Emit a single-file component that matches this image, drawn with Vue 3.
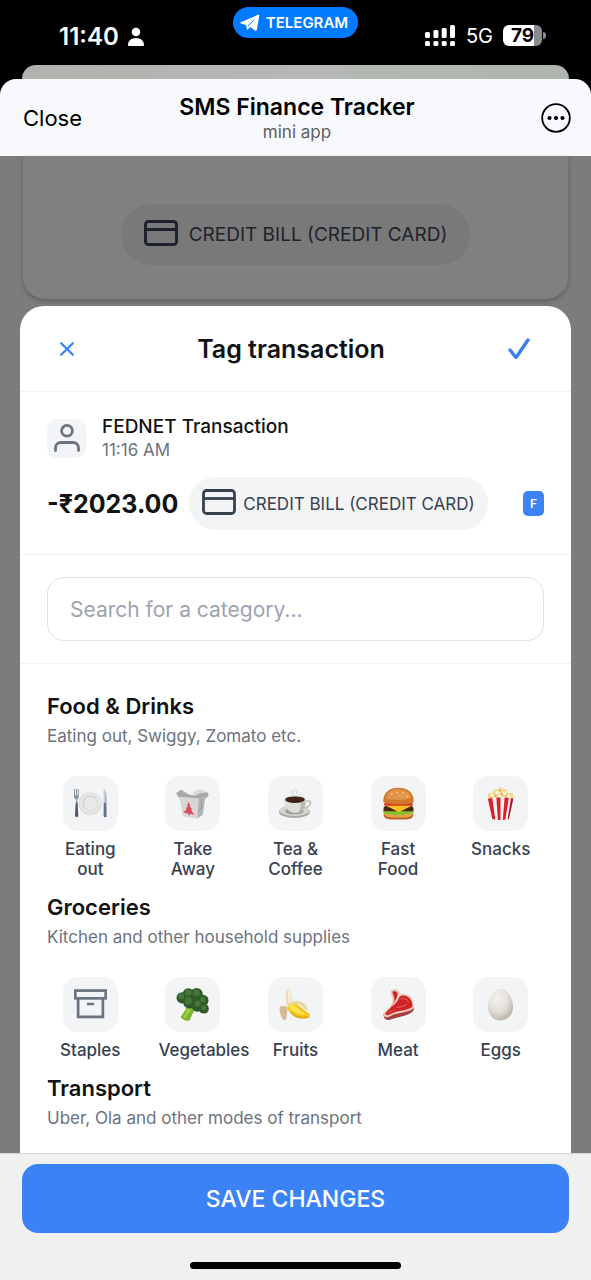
<script setup>
import { ref } from 'vue'

const query = ref('')

const groups = [
  {
    title: 'Food & Drinks',
    note: 'Eating out, Swiggy, Zomato etc.',
    items: [
      { icon: 'plate', label: 'Eating out' },
      { icon: 'takeaway', label: 'Take Away' },
      { icon: 'coffee', label: 'Tea & Coffee' },
      { icon: 'burger', label: 'Fast Food' },
      { icon: 'popcorn', label: 'Snacks' },
    ],
  },
  {
    title: 'Groceries',
    note: 'Kitchen and other household supplies',
    items: [
      { icon: 'box', label: 'Staples' },
      { icon: 'broccoli', label: 'Vegetables' },
      { icon: 'banana', label: 'Fruits' },
      { icon: 'meat', label: 'Meat' },
      { icon: 'egg', label: 'Eggs' },
    ],
  },
  {
    title: 'Transport',
    note: 'Uber, Ola and other modes of transport',
    items: [],
  },
]
</script>

<template>
  <div class="screen">
    <div class="status">
      <div class="status-row">
        <div class="clock">
          <span>11:40</span>
          <svg width="18" height="20" viewBox="0 0 18 20" fill="#fff">
            <circle cx="9" cy="5" r="4.3" />
            <path d="M1 18.2C.8 13.800 4.500 11 9 11s8.200 2.800 8 7.200c0 .5-.4.8-.9.8H1.900c-.5 0-.9-.3-.9-.8z" />
          </svg>
        </div>
        <div class="pill">
          <svg width="20" height="18" viewBox="0 0 20 18">
            <path fill="#fff" d="M.8 8.200 18 .8c.9-.4 1.500.1 1.300 1L16.800 16c-.2 1-.9 1.200-1.700.7l-4.700-3.600-2.500 2.400c-.5.5-1.100.3-1.200-.4l-.6-4.200L.8 9.500c-.8-.3-.8-1 0-1.300z" />
            <path fill="none" stroke="#007aff" stroke-width="1" d="M7.800 12.200 14.200 5.600" />
          </svg>
          <span>TELEGRAM</span>
        </div>
        <div class="signals">
          <svg width="31" height="22" viewBox="0 0 31 22" fill="#fff">
            <rect x="0" y="7" width="5" height="6" rx="1.500" />
            <rect x="8.400" y="5" width="5" height="8" rx="1.500" />
            <rect x="16.700" y="3" width="5" height="10" rx="1.500" />
            <rect x="25" y="0" width="5" height="13" rx="1.500" />
            <rect x="0" y="16" width="5" height="5" rx="1.500" />
            <rect x="8.400" y="16" width="5" height="5" rx="1.500" />
            <rect x="16.700" y="16" width="5" height="5" rx="1.500" />
            <rect x="25" y="16" width="5" height="5" rx="1.500" />
          </svg>
          <span class="network">5G</span>
          <span class="battery">79</span>
        </div>
      </div>
      <div class="behind"></div>
    </div>

    <header class="app-bar">
      <button class="close" type="button">Close</button>
      <div class="app-name">
        <h1>SMS Finance Tracker</h1>
        <p>mini app</p>
      </div>
      <button class="more" type="button" aria-label="More options">
        <svg width="30" height="30" viewBox="0 0 30 30">
          <circle cx="15" cy="15" r="13.800" fill="none" stroke="#000" stroke-width="1.800" />
          <circle cx="8.500" cy="15" r="2.100" /><circle cx="15" cy="15" r="2.100" /><circle cx="21.500" cy="15" r="2.100" />
        </svg>
      </button>
    </header>

    <main class="stage">
      <div class="dim-card">
        <div class="dim-chip">
          <svg class="card-icon" width="34" height="26" viewBox="0 0 34 26" fill="none" stroke="currentColor" stroke-width="3">
            <rect x="1.500" y="1.500" width="31" height="23" rx="3" /><path d="M1.500 9.500h31" />
          </svg>
          <span>CREDIT BILL (CREDIT CARD)</span>
        </div>
      </div>

      <section class="sheet">
        <div class="sheet-head">
          <button type="button" aria-label="Cancel">
            <svg width="14" height="14" viewBox="0 0 14 14" stroke="#3b82f6" stroke-width="2.200" stroke-linecap="round">
              <path d="M1.200 1.200l11.600 11.600M12.800 1.200 1.200 12.800" />
            </svg>
          </button>
          <h2>Tag transaction</h2>
          <button type="button" aria-label="Confirm">
            <svg width="22" height="22" viewBox="0 0 22 22" fill="none" stroke="#3b82f6" stroke-width="3.500" stroke-linecap="round" stroke-linejoin="round">
              <path d="M2 12l6 7.500L20 2" />
            </svg>
          </button>
        </div>

        <div class="transaction">
          <div class="payee">
            <span class="avatar">
              <svg width="26" height="28" viewBox="0 0 26 28" fill="none" stroke="#6b7280" stroke-width="2.800" stroke-linecap="round">
                <circle cx="13" cy="6.800" r="5.400" />
                <path d="M1.500 26.500v-2.500c0-3.500 2.300-5.500 5.500-5.500h12c3.200 0 5.500 2 5.500 5.500v2.500" />
              </svg>
            </span>
            <div>
              <p class="payee-name">FEDNET Transaction</p>
              <p class="payee-time">11:16 AM</p>
            </div>
          </div>
          <div class="amount-row">
            <strong>-₹2023.00</strong>
            <span class="chip">
              <svg class="card-icon" width="34" height="26" viewBox="0 0 34 26" fill="none" stroke="currentColor" stroke-width="2.800">
                <rect x="1.500" y="1.500" width="31" height="23" rx="3" /><path d="M1.500 9.500h31" />
              </svg>
              <span>CREDIT BILL (CREDIT CARD)</span>
            </span>
            <span class="bank">F</span>
          </div>
        </div>

        <div class="search">
          <input v-model="query" type="text" placeholder="Search for a category..." aria-label="Search for a category" />
        </div>

        <div class="groups">
          <div v-for="group in groups" :key="group.title" class="group">
            <h3>{{ group.title }}</h3>
            <p class="note">{{ group.note }}</p>
            <div v-if="group.items.length" class="items">
              <button v-for="item in group.items" :key="item.label" class="item" type="button">
                <span class="tile">
                  <svg v-if="item.icon === 'plate'" viewBox="0 0 32 32">
                    <circle cx="15.700" cy="16" r="11" fill="#cfd1d2" />
                    <circle cx="15.700" cy="15.600" r="10.500" fill="#e6e6e5" />
                    <circle cx="15.700" cy="15.600" r="7.200" fill="#cbcccc" />
                    <circle cx="15.900" cy="16" r="6.500" fill="#e9e9e8" />
                    <path fill="#8795a5" d="M0 2h1v6h.8V2h1v6h.8V2h1v7.500c0 1.500-.7 2.300-1.300 2.600l.8 15.900c0 1.500-2.600 1.500-2.600 0l.7-15.900C.6 11.700 0 11 0 9.500z" />
                    <path fill="#4b5563" d="M1.700 15h1.500l.9 12.500c0 2-3.200 2-3.100 0z" />
                    <path fill="#a8b6c4" d="M29 2c2 1.500 3 7 2.600 13h-2z" />
                    <path fill="#64748b" d="M28.800 15h2.600l.3 13c0 1.800-3 1.800-3 0z" />
                    <path fill="#c9d2da" d="M28.600 3h1.400v12h-1.400z" />
                  </svg>
                  <svg v-else-if="item.icon === 'takeaway'" viewBox="0 0 32 32">
                    <path fill="#d8d9da" d="M17 5c3-3 10-3.500 13 1l-3 8H15z" />
                    <path fill="#a7a9aa" d="M0 6 5 2.600l7 4.500 6 1.500 6-2.600 7-1 .5 3.500L27.500 12l-24-.5z" />
                    <path fill="#d6d6d5" d="M3 9.500 22 11l-1.500 19.500L7 28.500z" />
                    <path fill="#b2b4b4" d="M22 11l6.500-2.500L26 27l-5.500 3.500z" />
                    <path fill="#dc4a5e" d="M11.800 14.500l2.300 3.500-1 .3 2.600 3.500-1.200.2 3.200 4.800-4-.8-.2 1.500-1.500-.3v-1.400l-5-1 3.500-3.300-1.100-.3 2.200-2.800-.8-.4z" />
                    <path fill="none" stroke="#8f9192" stroke-width=".8" d="M24 12c2 5 1 9-2 12" />
                  </svg>
                  <svg v-else-if="item.icon === 'coffee'" viewBox="0 0 32 32">
                    <ellipse cx="15" cy="24" rx="15" ry="6" fill="#aaa9a5" />
                    <ellipse cx="15" cy="22.700" rx="14.500" ry="5.300" fill="#d6d5d0" />
                    <ellipse cx="15" cy="23.500" rx="9" ry="3" fill="#9e9c96" />
                    <path fill="none" stroke="#c7c5be" stroke-width="1.800" d="M25 14c5-1.500 6.500.5 5 3s-4 3.500-7 3.500" />
                    <path fill="#dfded9" d="M5 12h21c0 7-4 13-10.500 13S5 19 5 12z" />
                    <path fill="#b8b6b0" d="M21 14h5c-.5 6-3.500 10-7 10.700 2-3 2.500-7 2-10.700z" />
                    <ellipse cx="15.500" cy="12" rx="10.500" ry="3.900" fill="#e2e0da" />
                    <ellipse cx="15.500" cy="12.300" rx="9.500" ry="3.200" fill="#3f2117" />
                    <path fill="none" stroke="#d5d6d7" stroke-width="1.200" stroke-linecap="round" d="M14 7c-3-2-1-3 0-4M17 6c1-2-1-2-1-3.500" />
                  </svg>
                  <svg v-else-if="item.icon === 'burger'" viewBox="0 0 32 32">
                    <path fill="#b9651f" d="M1.500 26h29c0 4-3 5.500-7 5.500H8.500c-4 0-7-1.500-7-5.500z" />
                    <path fill="#e7a14c" d="M2 25h28c0 3-3 4.500-7 4.500H9C5 29.500 2 28 2 25z" />
                    <path fill="#83c12d" d="M1 22c2-2 28-2 30 0 .8 2-.7 4-3 3.500-2 2-4 0-6 1.200-3 1.300-5-.6-8 .5-3 .7-4-1.500-7-.7C3.500 27 .2 25 1 22z" />
                    <rect x="1.500" y="18.500" width="29" height="5" rx="2.500" fill="#4b2414" />
                    <path fill="#fbc21f" d="M2 17.500h28l-5 2.500-8.500 4.500L8 20z" />
                    <rect x="2" y="15.500" width="28" height="2.800" rx="1.400" fill="#d93b24" />
                    <path fill="#d1782c" d="M1.200 14C1.200 5 8 .8 16 .8S30.800 5 30.800 14c0 3.500-29.600 3.500-29.600 0z" />
                    <path fill="#e09447" d="M3.500 11C5 4.500 10 2 16 2s11 3 12.500 8.500c-4 2.500-20 3-25 .5z" />
                    <path stroke="#f9d69b" stroke-width="1" stroke-linecap="round" d="M9 7l1-.7M14 5l1 .3M20 5.500l1 .5M24 9l1 .5M17 8.500h1" />
                  </svg>
                  <svg v-else-if="item.icon === 'popcorn'" viewBox="0 0 32 32">
                    <g fill="#efd78c">
                      <circle cx="7" cy="9" r="3.500" /><circle cx="12" cy="6" r="3.800" /><circle cx="19" cy="5.500" r="3.800" /><circle cx="25" cy="9" r="3.500" /><circle cx="16" cy="2.800" r="2.300" /><circle cx="16" cy="10" r="4" />
                    </g>
                    <g fill="#fff5d2">
                      <circle cx="8" cy="8" r="1.700" /><circle cx="13" cy="5" r="1.700" /><circle cx="20" cy="6" r="1.900" /><circle cx="24" cy="9" r="1.700" /><circle cx="15" cy="9" r="1.700" />
                    </g>
                    <path fill="none" stroke="#c28a2d" stroke-width=".9" d="M10 8l2 1M17 6l1 2M22 8l-1 2M14 3l2 1M6 10l2 1" />
                    <path fill="#f4eeee" d="M3.800 11.500c8-2 17-2 24.500 0L24 31c-5 1.300-11 1.300-16 0z" />
                    <path fill="#d5232e" d="M3.800 11.500 8 10.700 11 31.600 8 31zM12 10.200h4V32h-2.500zM20 10.200l4 .5L20.700 31.600l-2.500.3zM28.300 11.500 26 11l-3 20.200 1-.2z" />
                    <path fill="#a51c27" d="M27 11.200l1.300.3L24 31l-1 .2z" />
                  </svg>
                  <svg v-else-if="item.icon === 'box'" viewBox="0 0 32 32" fill="none" stroke="#6b7280" stroke-width="2.600">
                    <rect x="1.300" y="2.500" width="29.400" height="7.500" />
                    <path d="M4 10v18h24V10M12.500 15.500h7" />
                  </svg>
                  <svg v-else-if="item.icon === 'broccoli'" viewBox="0 0 32 32">
                    <path fill="#78b62d" d="M12 17l9 3-4 3-4 8.500c-2 1-7-1-8.500-3.500z" />
                    <path fill="#a0d047" d="M12 19l3 1-6 9.500-2-1z" />
                    <g fill="#2f5a27">
                      <circle cx="6" cy="9.500" r="5.500" /><circle cx="12" cy="5.800" r="5.500" /><circle cx="20" cy="6" r="6" /><circle cx="26" cy="12" r="5.500" /><circle cx="27" cy="20" r="4.800" /><circle cx="21" cy="17" r="6" /><circle cx="13" cy="14" r="6" />
                    </g>
                    <g fill="#437639">
                      <circle cx="5" cy="8" r="2.800" /><circle cx="12" cy="4.500" r="3" /><circle cx="20" cy="4.700" r="3.200" /><circle cx="26" cy="11" r="2.800" /><circle cx="12" cy="12.500" r="3.500" /><circle cx="21" cy="15" r="3" /><circle cx="27" cy="19" r="2.500" />
                    </g>
                  </svg>
                  <svg v-else-if="item.icon === 'banana'" viewBox="0 0 32 32">
                    <path fill="#eadcb8" d="M7.500 1.500c2-2 3.500 0 3.500 2l2 11-4 5c-3-5-3-12-1.500-18z" />
                    <path fill="#fbf3d9" d="M8.500 2h1.700l1.500 13-2 2z" />
                    <path fill="#d3bb93" d="M1 18c3-1 6-1 7.500 1L7 30c-1.500 2-3 1-4-1-2-4-3-8-2-11z" />
                    <path fill="#f7c71d" d="M10 15c6-4 13 7 19 9.500 1.500 1 1.500 3.500-.2 4.300C21 31 10 27 8.500 20z" />
                    <path fill="#ffe451" d="M11 15.500c5-1 8 8 16 10-8 .5-14-2-17-7z" />
                    <path fill="#e5a917" d="M10.500 22c4 5 11 6 18 5.500l.2 1.300C21 31 13 29 10.500 22z" />
                    <path fill="#e6d6a6" d="M11 14.500c7-4 15-1 16.500 5.500.3 2-1.300 2-2.300.7C22 16 18 14.500 12 16z" />
                  </svg>
                  <svg v-else-if="item.icon === 'meat'" viewBox="0 0 32 32">
                    <path fill="#a4403f" d="M1.500 25 9 20l21-3 1 3.500C29 27 14 28 7 31c-3 .8-6-2-5.500-6z" />
                    <path fill="#efc9bd" d="M9 2c4-2.500 8-.5 8.500 4 7-2 14 3.500 13.500 12-.2 5-13 6-19 7.500-4 1.500-7 4.500-10 2-2-2 0-4.500 3-7 5-4.500 6-7 4.500-12C8.500 6 7.500 3 9 2z" />
                    <path fill="#cc2426" d="M10.500 3.500c3-1 4.800.5 4.800 3l-1.800 6.500c1.500-4 5-6.500 9-5.500 4 1 7 5 7 9.500 0 4-10 4.500-16 6-4 1-6.500 4-9 3.200-2.500-1.200 0-3.200 2-5 5-5 6.500-8 5-13-.6-2-2-4-1-4.700z" />
                    <path fill="#f6ddd0" d="M15.500 6l2-.2c-1 4-2 7.500-7.500 12 2-4 4-7 5.500-11.800z" />
                    <path fill="none" stroke="#e85b50" stroke-width="1" d="M18 11c3-2 7 0 8 3M14 19c4 0 7-1 10-3M6 24l6-3" />
                  </svg>
                  <svg v-else viewBox="0 0 32 32">
                    <defs>
                      <radialGradient id="shell" cx="38%" cy="32%" r="72%">
                        <stop offset="0" stop-color="#f4f2ed" /><stop offset=".55" stop-color="#e3e0da" /><stop offset="1" stop-color="#b8b4ab" />
                      </radialGradient>
                    </defs>
                    <path fill="url(#shell)" d="M16 1c7 0 12.200 9 12.200 17.500C28.200 26 23 31.500 16 31.500S3.800 26 3.800 18.500C3.800 10 9 1 16 1z" />
                  </svg>
                </span>
                <span class="label">{{ item.label }}</span>
              </button>
            </div>
          </div>
        </div>
      </section>
    </main>

    <footer class="footer">
      <button class="save" type="button">SAVE CHANGES</button>
      <div class="home"></div>
    </footer>
  </div>
</template>

<style>
body {
  margin: 0;
  background: #7b7d7c;
}
</style>

<style scoped>
.screen {
  display: flex;
  flex-direction: column;
  min-height: 100vh;
  background: #7b7d7c;
  color: #111214;
  font-family: Inter, "Liberation Sans", sans-serif;
}
h1, h2, h3, p {
  margin: 0;
}
button {
  border: 0;
  padding: 0;
  background: none;
  color: inherit;
  font: inherit;
  cursor: pointer;
}
svg {
  display: block;
  flex: none;
}

.status {
  padding-bottom: 16px;
  background: #000;
  color: #fff;
}
.status-row {
  display: grid;
  grid-template-columns: 1fr auto 1fr;
  height: 65px;
}
.clock {
  display: flex;
  align-items: center;
  gap: 8px;
  padding: 8px 0 0 59px;
  font-size: 24px;
  font-weight: 600;
}
.pill {
  display: flex;
  align-items: center;
  gap: 6px;
  height: 31px;
  margin-top: 7px;
  padding: 0 10px 0 7px;
  border-radius: 16px;
  background: #007aff;
  font-size: 15px;
  font-weight: 600;
}
.signals {
  display: flex;
  align-items: center;
  justify-content: flex-end;
  gap: 10px;
  padding: 6px 49px 0 0;
}
.network {
  font-size: 20px;
  font-weight: 400;
}
.battery {
  position: relative;
  width: 39px;
  height: 21px;
  border-radius: 6px;
  background: linear-gradient(90deg, #fff 79%, #8b8b8b 79%);
  color: #000;
  font-size: 19px;
  font-weight: 700;
  line-height: 21px;
  text-align: center;
}
.battery::after {
  content: "";
  position: absolute;
  top: 7px;
  right: -4px;
  width: 3px;
  height: 7px;
  border-radius: 0 3px 3px 0;
  background: #8b8b8b;
}
.behind {
  height: 14px;
  margin: 0 22px;
  border-radius: 14px 14px 0 0;
  background: linear-gradient(90deg, #b1b1ad, #b7b8b6 50%, #b1b8af 75%, #adb5ac);
}

.app-bar {
  display: grid;
  grid-template-columns: 1fr auto 1fr;
  align-items: center;
  height: 77px;
  margin-top: -16px;
  padding: 0 20px 0 23px;
  border-radius: 16px 16px 0 0;
  background: #f7f9fc;
  color: #000;
}
.close {
  justify-self: start;
  font-size: 22px;
}
.more {
  justify-self: end;
}
.app-name {
  text-align: center;
}
.app-name h1 {
  font-size: 23px;
  font-weight: 600;
  line-height: 28px;
}
.app-name p {
  color: #5c5f64;
  font-size: 17px;
  line-height: 22px;
}

.stage {
  display: flex;
  flex: 1;
  flex-direction: column;
  padding: 0 20px;
}
.dim-card {
  display: flex;
  justify-content: center;
  margin: 0 3px 7px;
  padding: 48px 0 34px;
  border-radius: 0 0 22px 22px;
  background: #808080;
  box-shadow: 0 2px 5px rgb(0 0 0 / 25%);
}
.dim-chip {
  display: flex;
  align-items: center;
  gap: 11px;
  height: 61px;
  padding: 0 23px;
  border-radius: 31px;
  background: #797979;
  color: #1d222b;
  font-size: 19px;
}
.card-icon {
  margin-bottom: 4px;
}

.sheet {
  display: flex;
  flex: 1;
  flex-direction: column;
  border-radius: 24px 24px 0 0;
  background: #fff;
}
.sheet-head {
  display: flex;
  align-items: center;
  justify-content: space-between;
  height: 85px;
  padding: 0 41px 0 40px;
  border-bottom: 1px solid #eff0f2;
}
.sheet-head h2 {
  font-size: 25px;
  font-weight: 600;
  line-height: 32px;
}
.transaction {
  padding: 23px 27px 24px;
  border-bottom: 1px solid #eff0f2;
}
.payee {
  display: flex;
  align-items: center;
  gap: 16px;
}
.avatar {
  display: grid;
  place-items: center;
  width: 39px;
  height: 39px;
  border-radius: 10px;
  background: #f3f4f6;
}
.payee-name {
  font-size: 19px;
  font-weight: 500;
  line-height: 24px;
}
.payee-time {
  color: #6b7280;
  font-size: 17px;
  line-height: 22px;
}
.amount-row {
  display: flex;
  align-items: center;
  margin-top: 16px;
}
.amount-row strong {
  font-size: 25px;
  font-weight: 700;
}
.chip {
  display: flex;
  align-items: center;
  gap: 7px;
  height: 53px;
  margin-left: 11px;
  padding: 0 13px;
  border-radius: 27px;
  background: #f3f4f6;
  color: #374151;
  font-size: 17px;
}
.bank {
  width: 21px;
  height: 25px;
  margin-left: auto;
  border-radius: 5px;
  background: #3b82f6;
  color: #fff;
  font-size: 12px;
  font-weight: 600;
  line-height: 25px;
  text-align: center;
}
.search {
  padding: 22px 27px;
  border-bottom: 1px solid #eff0f2;
}
.search input {
  display: block;
  box-sizing: border-box;
  width: 100%;
  height: 64px;
  padding: 0 22px;
  border: 1px solid #dfe1e5;
  border-radius: 17px;
  background: #fff;
  color: #111214;
  font: inherit;
  font-size: 21px;
}
.search input::placeholder {
  color: #9ca3af;
  opacity: 1;
}
.groups {
  display: flex;
  flex-direction: column;
  gap: 12px;
  padding: 26px 27px 23px;
}
.group h3 {
  font-size: 22px;
  font-weight: 600;
  line-height: 32px;
}
.note {
  margin-top: 2px;
  color: #6b7280;
  font-size: 17px;
  line-height: 24px;
}
.items {
  display: grid;
  grid-template-columns: repeat(5, minmax(0, 1fr));
  gap: 16px;
  margin-top: 28px;
}
.item {
  display: flex;
  flex-direction: column;
  align-items: center;
  gap: 8px;
}
.tile {
  display: grid;
  place-items: center;
  width: 55px;
  height: 55px;
  border-radius: 15px;
  background: #f3f4f6;
}
.tile svg {
  width: 33px;
  height: 33px;
}
.label {
  max-width: 69px;
  color: #374151;
  font-size: 17px;
  font-weight: 500;
  line-height: 20px;
}

.footer {
  padding: 10px 22px 11px;
  border-top: 1px solid #d6d6d6;
  background: #f0f0f0;
}
.save {
  display: block;
  width: 100%;
  height: 69px;
  border-radius: 16px;
  background: #3b82f6;
  color: #fff;
  font-size: 23px;
  font-weight: 500;
}
.home {
  width: 211px;
  height: 7px;
  margin: 29px auto 0;
  border-radius: 4px;
  background: #000;
}
</style>
